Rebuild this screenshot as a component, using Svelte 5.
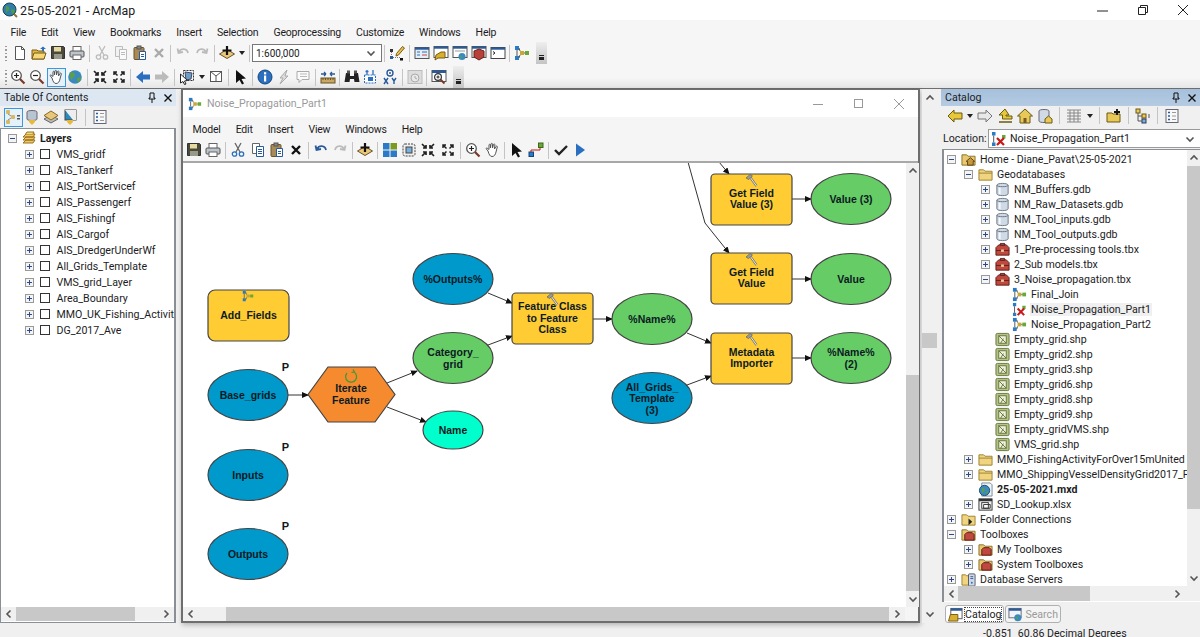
<script lang="ts">
  const I: Record<string, string> = {
    new: '<path d="M3.5 1.5h6l3 3v10h-9z" fill="#fff" stroke="#555"/><path d="M9.5 1.5v3h3" fill="none" stroke="#555"/>',
    open: '<path d="M1 5h5l1 1h6v8H1z" fill="#e0b94a" stroke="#7a5a10"/><path d="M1 14l2-6h12l-2 6z" fill="#f4d87a" stroke="#7a5a10"/><path d="M9 4l3-2.5 3 2.5h-2v2h-2V4z" fill="#2a6fc0"/>',
    save: '<path d="M1.5 1.5h12l1 1v11h-13z" fill="#4a4a3c" stroke="#333"/><rect x="4" y="2" width="7" height="4.5" fill="#e8d9a0"/><rect x="4" y="9" width="8" height="5" fill="#9a9a8a"/>',
    print: '<rect x="4" y="1.5" width="8" height="5" fill="#fff" stroke="#666"/><rect x="1" y="6" width="14" height="6" rx="1" fill="#bcc4cc" stroke="#555"/><rect x="4" y="10" width="8" height="4.5" fill="#fff" stroke="#666"/>',
    cut: '<path d="M5 1l5 9M11 1l-5 9" stroke="#666" stroke-width="1.3" fill="none"/><circle cx="4.5" cy="12" r="2.2" fill="none" stroke="#2a6fc0" stroke-width="1.3"/><circle cx="11.5" cy="12" r="2.2" fill="none" stroke="#2a6fc0" stroke-width="1.3"/>',
    cutg: '<g opacity=".45"><path d="M5 1l5 9M11 1l-5 9" stroke="#777" stroke-width="1.3" fill="none"/><circle cx="4.5" cy="12" r="2.2" fill="none" stroke="#777" stroke-width="1.3"/><circle cx="11.5" cy="12" r="2.2" fill="none" stroke="#777" stroke-width="1.3"/></g>',
    copy: '<path d="M2.5 1.5h7v10h-7z" fill="#fff" stroke="#666"/><path d="M6.5 4.5h7v10h-7z" fill="#fff" stroke="#2a5a9a"/><path d="M8 7.5h4M8 9.5h4M8 11.5h4" stroke="#2a5a9a"/>',
    copyg: '<g opacity=".45"><path d="M2.5 1.5h7v10h-7z" fill="#eee" stroke="#777"/><path d="M6.5 4.5h7v10h-7z" fill="#fff" stroke="#777"/><path d="M8 7.5h4M8 9.5h4" stroke="#777"/></g>',
    paste: '<rect x="2" y="2.5" width="10" height="12" rx="1" fill="#a88a58" stroke="#6a5228"/><rect x="5" y="1" width="4" height="3" fill="#888" stroke="#555"/><path d="M7.5 6.5h6v8h-6z" fill="#fff" stroke="#2a5a9a"/><path d="M9 9.5h3M9 11.5h3" stroke="#2a5a9a"/>',
    del: '<path d="M4 4l8 8M12 4l-8 8" stroke="#111" stroke-width="2.4"/>',
    delg: '<path d="M4 4l8 8M12 4l-8 8" stroke="#aaa" stroke-width="2.4"/>',
    undo: '<path d="M4 7c2-4 8-4 9 1M2.5 3.5L3.5 8l4.5-1" fill="none" stroke="#2a5a9a" stroke-width="1.8"/>',
    undog: '<path d="M4 7c2-4 8-4 9 1M2.5 3.5L3.5 8l4.5-1" fill="none" stroke="#bbb" stroke-width="1.8"/>',
    redog: '<path d="M12 7C10 3 4 3 3 8M13.5 3.5L12.5 8 8 7" fill="none" stroke="#bbb" stroke-width="1.8"/>',
    add: '<path d="M0.5 9L8 4.5 15.5 9 8 13.5z" fill="#e8c878" stroke="#6a5228"/><path d="M8 1v9M3.5 5.5h9" stroke="#111" stroke-width="2.2"/>',
    edit: '<rect x="1" y="4" width="3" height="3" fill="#333"/><rect x="1" y="11" width="3" height="3" fill="#2a5a9a"/><rect x="11" y="13" width="3" height="2.5" fill="#111"/><path d="M2.5 7v4M4 12.5h7" stroke="#777" stroke-dasharray="1 1"/><path d="M13.5 1.5l2 1.5-6 7-2.5 1 .5-2.5z" fill="#e8c050" stroke="#7a5a10"/>',
    zoomin: '<circle cx="6.5" cy="6.5" r="4.8" fill="#fff" stroke="#555" stroke-width="1.3"/><path d="M10 10l4.5 4.5" stroke="#7a3a2a" stroke-width="2.2"/><path d="M4 6.5h5M6.5 4v5" stroke="#222" stroke-width="1.2"/>',
    zoomout: '<circle cx="6.5" cy="6.5" r="4.8" fill="#fff" stroke="#555" stroke-width="1.3"/><path d="M10 10l4.5 4.5" stroke="#7a3a2a" stroke-width="2.2"/><path d="M4 6.5h5" stroke="#222" stroke-width="1.2"/>',
    hand: '<path d="M4 9L2 6.5c.6-.8 1.5-.4 3 1V3c0-1 1.4-1 1.5 0v3l.5-4c.2-1 1.5-.8 1.5.2V6l1-3.5c.3-.9 1.5-.6 1.4.3L10.5 7l1.5-2.5c.5-.8 1.6-.3 1.3.5L12 10c-.6 2.5-1.5 4.5-4 4.5-2 0-3-2-4-5.5z" fill="#fff" stroke="#555"/>',
    globe: '<circle cx="8" cy="8" r="6.8" fill="#3a8ac0"/><path d="M4 3c2 0 4 1 4 3s-3 2-3 5c-2-1-3-5-1-8zM10 9c2-1 4-1 4 0 0 2-2 4-3 4s-1-3-1-4z" fill="#5aa048"/>',
    fin: '<path d="M2 2l4 4M6 3v3H3M14 2l-4 4M10 3v3h3M2 14l4-4M6 13v-3H3M14 14l-4-4M10 13v-3h3" stroke="#222" stroke-width="1.7" fill="none"/>',
    fout: '<path d="M3 6V3h3M3 3l3.5 3.5M13 6V3h-3M13 3L9.5 6.5M3 10v3h3M3 13l3.5-3.5M13 10v3h-3M13 13L9.5 9.5" stroke="#222" stroke-width="1.5" fill="none"/>',
    back: '<path d="M1 8l7-6v3.5h7v5H8V14z" fill="#2a6fc0"/>',
    fwdg: '<path d="M15 8L8 2v3.5H1v5h7V14z" fill="#bbb"/>',
    sel: '<rect x="4.5" y="1.5" width="10" height="10" fill="none" stroke="#333" stroke-dasharray="2 1"/><path d="M6 3l7 1-1 6-5 1z" fill="#6aa0c8" stroke="#446"/><path d="M1.5 5l7 6.5-3 .5 1.5 3-1.5.5-1.5-3-2.5 1.5z" fill="#fff" stroke="#222"/>',
    clear: '<rect x="2.5" y="2.5" width="11" height="10" fill="#fff" stroke="#555"/><path d="M2.5 2.5L8 7l5-4M8 7v5.5" fill="none" stroke="#555"/>',
    ptr: '<path d="M3 1l10 8.5-4.5.5 2.5 4.5-2 1-2.5-4.5L3 14z" fill="#111"/>',
    info: '<circle cx="8" cy="8" r="7" fill="#2a6fc0" stroke="#14457a"/><rect x="7" y="6.5" width="2.2" height="6" fill="#fff"/><rect x="7" y="3.2" width="2.2" height="2.2" fill="#fff"/>',
    bolt: '<path d="M11 1L4 9h3l-3 6 8-8H9z" fill="#ddd" stroke="#aaa"/>',
    html: '<path d="M2 2.5h12v8H7l-3 3v-3H2z" fill="#fafafa" stroke="#aaa"/><path d="M5 5h7M5 7.5h7" stroke="#bbb"/>',
    meas: '<rect x="1" y="9" width="14" height="5" fill="#c8a860" stroke="#6a5228"/><path d="M3 9v2M5.5 9v2M8 9v2M10.5 9v2M13 9v2" stroke="#6a5228"/><path d="M1 5h5M6 5L4 3M6 5L4 7M15 5h-5M10 5l2-2M10 5l2 2" stroke="#2a5a9a" stroke-width="1.3" fill="none"/>',
    bino: '<path d="M2 4h4v3h4V4h4l1.5 9h-5L10 10H6l-.5 3h-5z" fill="#222"/><rect x="3" y="1.5" width="3" height="3" fill="#555"/><rect x="10" y="1.5" width="3" height="3" fill="#555"/>',
    route: '<rect x="1.5" y="6" width="11" height="8" fill="#fff" stroke="#2a6fc0" stroke-dasharray="2 1"/><path d="M4 1v5M2.5 2.5h3M10 1v5" stroke="#2a6fc0" stroke-width="1.3"/><rect x="5" y="8" width="5" height="4" fill="#2a6fc0"/>',
    xy: '<circle cx="8" cy="4" r="3" fill="#fff" stroke="#2a5a9a" stroke-width="1.4"/><circle cx="8" cy="4" r="1" fill="#2a5a9a"/><path d="M2 9l4 6M6 9l-4 6M10 9l2 3 2-3M12 12v3" stroke="#2a5a9a" stroke-width="1.4" fill="none"/>',
    time: '<rect x="1" y="1.5" width="14" height="13" fill="#ddd" stroke="#bbb"/><circle cx="8" cy="9" r="4" fill="#e8e8e8" stroke="#aaa"/><path d="M8 7v2l2 1" stroke="#aaa" fill="none"/>',
    winz: '<rect x="1" y="1.5" width="14" height="11" fill="#fff" stroke="#555"/><rect x="1" y="1.5" width="14" height="2.5" fill="#2a5a9a"/><circle cx="7" cy="8" r="3.4" fill="#fff" stroke="#333" stroke-width="1.2"/><path d="M5.5 8h3M7 6.5v3" stroke="#222"/><path d="M9.5 10.5l4 4" stroke="#7a3a2a" stroke-width="2"/>',
    wtoc: '<rect x="1" y="2.5" width="14" height="11" fill="#e4eef8" stroke="#555"/><rect x="1" y="2.5" width="14" height="2.2" fill="#2a5a9a"/><path d="M3 7h3M3 10h3M8 7h5" stroke="#2a6fc0"/><path d="M8 10h5" stroke="#d04040"/>',
    wcat: '<rect x="1" y="1.5" width="14" height="11" fill="#fff" stroke="#555"/><rect x="1" y="1.5" width="14" height="2.2" fill="#2a5a9a"/><path d="M3 10l5-3h4v6H5l-3 2z" fill="#d8b030" stroke="#7a5a10"/>',
    wsea: '<rect x="1" y="1.5" width="14" height="11" fill="#fff" stroke="#555"/><rect x="1" y="1.5" width="14" height="2.2" fill="#2a5a9a"/><rect x="3" y="5" width="10" height="2" fill="#ccc"/><circle cx="10" cy="11.5" r="3.5" fill="#3a8ac0"/><path d="M8 10.5c2 0 3 1 2 3z" fill="#5aa048"/>',
    wtbx: '<rect x="1" y="1.5" width="14" height="11" fill="#fff" stroke="#555"/><rect x="1" y="1.5" width="14" height="2.2" fill="#2a5a9a"/><path d="M3 6l5-2 5 2v6l-5 3-5-3z" fill="#b8403a" stroke="#6a201c"/>',
    wpy: '<rect x="1" y="2.5" width="14" height="11" fill="#fff" stroke="#444"/><rect x="1" y="2.5" width="14" height="2.2" fill="#2a5a9a"/><path d="M3 6.5l2 1.5-2 1.5" fill="none" stroke="#222"/>',
    modelb: '<rect x="1" y="1" width="4" height="4" fill="#2a7ac8"/><rect x="1" y="11" width="4" height="4" fill="#2a7ac8"/><rect x="6" y="6" width="4" height="4" fill="#c8a838"/><rect x="11" y="6" width="4" height="4" fill="#68a838"/><path d="M3 5v6M5 3l1 3M5 13l1-3M10 8h1" stroke="#555" fill="none"/>',
    modelx: '<rect x="1" y="1" width="3.5" height="3.5" fill="#2a7ac8"/><rect x="1" y="11.5" width="3.5" height="3.5" fill="#2a7ac8"/><rect x="11" y="4" width="3.5" height="3.5" fill="#68a838"/><path d="M2.7 4.5v7" stroke="#555"/><path d="M6 7l7 7M13 7l-7 7" stroke="#c81818" stroke-width="2.2"/>',
    tocd: '<rect x="1" y="1" width="4" height="4" rx="1" fill="#d8b860"/><rect x="6" y="6" width="4" height="4" rx="1" fill="#d8b860"/><rect x="1" y="11" width="4" height="4" rx="1" fill="#d8b860"/><rect x="12" y="6" width="3" height="1.5" fill="#555"/><rect x="12" y="9" width="3" height="1.5" fill="#555"/><path d="M3 5l3 2M3 11l3-2" stroke="#888"/>',
    tocs: '<path d="M3 3c0-2 10-2 10 0v7c0 2-10 2-10 0z" fill="#b8c4d0" stroke="#667"/><path d="M5 11h6v2l-3 3-3-3z" fill="#e8b838"/>',
    tocv: '<path d="M1 10l7 4 7-4-7-4z" fill="#bbb" stroke="#666"/><path d="M1 6.5L8 2l7 4.5L8 11z" fill="#e8c878" stroke="#8a6a28"/>',
    tocl: '<rect x="3" y="1" width="11" height="10" fill="#2a8ac0" stroke="#444"/><path d="M3 1l8 10h3V1z" fill="#eee"/><path d="M5 11h6v2l-3 3-3-3z" fill="#e8b838"/>',
    opts: '<rect x="2" y="1.5" width="12" height="13" fill="#f8f8f8" stroke="#667"/><path d="M4 4.5h2M4 8h2M4 11.5h2" stroke="#2a5a9a" stroke-width="1.4"/><path d="M8 4.5h4M8 8h4M8 11.5h4" stroke="#999"/>',
    grid4: '<rect x="1" y="1" width="6.5" height="6.5" fill="#2a7ac8"/><rect x="8.5" y="1" width="6.5" height="6.5" fill="#7a9a20"/><rect x="1" y="8.5" width="6.5" height="6.5" fill="#2a7ac8"/><rect x="8.5" y="8.5" width="6.5" height="6.5" fill="#2a7ac8"/>',
    auto: '<rect x="2" y="2" width="12" height="12" rx="2" fill="#f0f0f0" stroke="#444" stroke-dasharray="2 1"/><rect x="5" y="5" width="6" height="6" fill="#7ab0d8" stroke="#444"/>',
    conn: '<rect x="1" y="10" width="4.5" height="4.5" fill="#2a7ac8" stroke="#14457a"/><rect x="10.5" y="1" width="4.5" height="4.5" fill="#68a838" stroke="#3a6a18"/><path d="M3 10V8h9V5.5" fill="none" stroke="#c81818"/>',
    check: '<path d="M2 8l4 4 8-8" fill="none" stroke="#222" stroke-width="2.4"/>',
    run: '<path d="M4 1.5l9 6.5-9 6.5z" fill="#2a6fc0"/>',
    cback: '<path d="M1 8l6-6v3h8v6H7v3z" fill="#e8c838" stroke="#6a5a10"/>',
    cfwd: '<path d="M15 8L9 2v3H1v6h8v3z" fill="#e8e8e8" stroke="#777"/>',
    cup: '<path d="M8 1L2 7h3.5v4H15V8H9V7h3z" fill="#e8c838" stroke="#6a5a10"/><path d="M2 14h13" stroke="#6a5a10" stroke-width="1.5"/>',
    chome: '<path d="M8 1L0.5 8H3v7h10V8h2.5z" fill="#e8c858" stroke="#6a5a10"/><rect x="6.5" y="10" width="3" height="5" fill="#7a5a20"/>',
    cconn: '<path d="M2 3c0-2 10-2 10 0v10c0 2-10 2-10 0z" fill="#d0dae6" stroke="#667"/><path d="M8 11l3.5-3 3.500 3v4H8z" fill="#e8c858" stroke="#6a5a10"/>',
    cgrid: '<path d="M1 2h14M1 5h14M1 8h14M1 11h14M1 14h14M4 2v12M8 2v12M12 2v12" stroke="#888"/>',
    cnew: '<path d="M1 5h5l1 1h7v8H1z" fill="#e8c858" stroke="#6a5a10"/><path d="M11 1v6M8 4h6" stroke="#111" stroke-width="1.8"/>',
    ctree: '<rect x="1" y="1" width="4" height="4" fill="#e8c858" stroke="#6a5a10"/><rect x="7" y="6" width="4" height="4" fill="#e8c858" stroke="#6a5a10"/><rect x="7" y="11" width="4" height="4" fill="#7ab0d8" stroke="#336"/><path d="M3 5v8h4M3 8h4" stroke="#555" fill="none"/><path d="M13 7h2M13 9h2" stroke="#555"/>',
    catalog: '<rect x="3" y="1.5" width="12" height="11" fill="#fff" stroke="#555"/><rect x="3" y="1.5" width="12" height="2.5" fill="#2a5a9a"/><path d="M0.5 15l2-7h8v7z" fill="#d8b030" stroke="#7a5a10"/>',
    search: '<rect x="1" y="1.5" width="13" height="10" fill="#f0f4f8" stroke="#667"/><rect x="1" y="1.5" width="13" height="2.5" fill="#2a5a9a"/><circle cx="10.5" cy="11.5" r="3.8" fill="#3a8ac0"/><path d="M8 10c2 0 3 1 2 4z" fill="#5aa048"/>',
    gdb: '<path d="M2 3.5c0-2.7 12-2.7 12 0v9c0 2.7-12 2.7-12 0z" fill="#d0dae6" stroke="#66727e"/><path d="M2 3.5c0 2 12 2 12 0" fill="none" stroke="#66727e"/><path d="M5 6v7" stroke="#f4f8fc" stroke-width="2"/>',
    tbx: '<path d="M1 6l3-3h8l3 3v8H1z" fill="#c0483e" stroke="#5e1e18"/><path d="M1 9h14" stroke="#5e1e18"/><rect x="6" y="1.5" width="4" height="2" fill="none" stroke="#5e1e18"/><rect x="6.5" y="8" width="3" height="2.5" fill="#e8d0a0"/>',
    shp: '<rect x="1" y="1.5" width="14" height="13" rx="1.5" fill="#b4c488" stroke="#66743c"/><rect x="4" y="4" width="8" height="8" fill="#eef2dc" stroke="#66743c"/><path d="M4 4l8 8M6 12l3-5" stroke="#66743c"/>',
    folder: '<path d="M1 3h5l1.5 1.5H15V14H1z" fill="#f0d480" stroke="#9a8230"/><path d="M1 6.5h14" stroke="#9a8230"/>',
    homef: '<path d="M1 3h5l1.5 1.5H15V14H1z" fill="#e8c870" stroke="#8a7028"/><path d="M10 6l4.5 4H13v4H7v-4H5.5z" fill="#c89840" stroke="#5a4010"/>',
    mxd: '<path d="M4 1h9l2 2v12H4z" fill="#eef4fa" stroke="#7a8a9a"/><circle cx="7" cy="9" r="5.5" fill="#3a8ac0" stroke="#1a4a6a"/><path d="M4.5 6c2 0 3.5 1 2.5 3s-2 2-3 3M8 11c1-1 3-1 3-.5s-1 2-2 2z" fill="#5aa048"/>',
    xls: '<rect x="1" y="2" width="14" height="12" fill="#eee" stroke="#333"/><rect x="1" y="2" width="14" height="2.5" fill="#333"/><rect x="4" y="6" width="7" height="6" fill="#fff" stroke="#333"/><path d="M6 8h7v4H6z" fill="none" stroke="#333"/>',
    fconn: '<path d="M1 3h5l1.5 1.5H15V14H1z" fill="#f0d480" stroke="#9a8230"/><path d="M8 7l4 3.5-4 3.5z" fill="#222"/>',
    tfold: '<path d="M1 3h5l1.5 1.5H15V14H1z" fill="#e8c870" stroke="#8a7028"/><path d="M4 8l2-2h6l2 2v6H4z" fill="#c0483e" stroke="#5e1e18"/>',
    dbs: '<path d="M1 3h4l1 1h4v10H1z" fill="#f0d480" stroke="#9a8230"/><rect x="8" y="2" width="7" height="13" rx="1" fill="#d0dae6" stroke="#556"/><path d="M10 5h3M10 7h3" stroke="#2a5a9a"/><circle cx="11.5" cy="11.5" r="1" fill="#2a6fc0"/>',
    layers: '<path d="M2 13l3-3h9l-2 3zM2 10l3-3h9l-2 3zM2 7l3-3h9l-2 3z" fill="#f0c860" stroke="#9a7020"/><path d="M4.5 4L6 2h7l-1 2" fill="#f0d880" stroke="#9a7020"/>'
  };

  const toolbarMain = ['new','open','save','print','|','cutg','copyg','paste','delg','|','undog','redog','|','add','v','|'];
  const toolbarMainEnd = ['|','edit','|','wtoc','wcat','wsea','wtbx','wpy','|','modelb'];
  const toolbarNav = ['zoomin','zoomout','*hand','globe','|','fin','fout','|','back','fwdg','|','sel','v','clear','|','ptr','|','info','bolt','html','|','meas','|','bino','route','xy','|','time','|','winz'];
  const toolbarToc = ['*tocd','tocs','tocv','tocl','|','opts'];
  const toolbarModel = ['save','print','|','cut','copy','paste','del','|','undo','redog','|','add','|','grid4','auto','fin','fout','|','zoomin','hand','|','ptr','conn','|','check','run'];
  const toolbarCatalog = ['cback','v','cfwd','cup','chome','cconn','|','cgrid','v','|','cnew','|','ctree','|','opts'];

  const menus = ['File','Edit','View','Bookmarks','Insert','Selection','Geoprocessing','Customize','Windows','Help'];
  const modelMenus = ['Model','Edit','Insert','View','Windows','Help'];

  const layers = ['VMS_gridf','AIS_Tankerf','AIS_PortServicef','AIS_Passengerf','AIS_Fishingf','AIS_Cargof','AIS_DredgerUnderWf','All_Grids_Template','VMS_grid_Layer','Area_Boundary','MMO_UK_Fishing_Activit','DG_2017_Ave'];

  const cat = [
    { d: 0, t: 'm', i: 'homef', n: 'Home - Diane_Pavat\\25-05-2021' },
    { d: 1, t: 'm', i: 'folder', n: 'Geodatabases' },
    { d: 2, t: 'p', i: 'gdb', n: 'NM_Buffers.gdb' },
    { d: 2, t: 'p', i: 'gdb', n: 'NM_Raw_Datasets.gdb' },
    { d: 2, t: 'p', i: 'gdb', n: 'NM_Tool_inputs.gdb' },
    { d: 2, t: 'p', i: 'gdb', n: 'NM_Tool_outputs.gdb' },
    { d: 2, t: 'p', i: 'tbx', n: '1_Pre-processing tools.tbx' },
    { d: 2, t: 'p', i: 'tbx', n: '2_Sub models.tbx' },
    { d: 2, t: 'm', i: 'tbx', n: '3_Noise_propagation.tbx' },
    { d: 3, t: '', i: 'modelb', n: 'Final_Join' },
    { d: 3, t: '', i: 'modelx', n: 'Noise_Propagation_Part1', sel: true },
    { d: 3, t: '', i: 'modelb', n: 'Noise_Propagation_Part2' },
    { d: 2, t: '', i: 'shp', n: 'Empty_grid.shp' },
    { d: 2, t: '', i: 'shp', n: 'Empty_grid2.shp' },
    { d: 2, t: '', i: 'shp', n: 'Empty_grid3.shp' },
    { d: 2, t: '', i: 'shp', n: 'Empty_grid6.shp' },
    { d: 2, t: '', i: 'shp', n: 'Empty_grid8.shp' },
    { d: 2, t: '', i: 'shp', n: 'Empty_grid9.shp' },
    { d: 2, t: '', i: 'shp', n: 'Empty_gridVMS.shp' },
    { d: 2, t: '', i: 'shp', n: 'VMS_grid.shp' },
    { d: 1, t: 'p', i: 'folder', n: 'MMO_FishingActivityForOver15mUnited' },
    { d: 1, t: 'p', i: 'folder', n: 'MMO_ShippingVesselDensityGrid2017_FC' },
    { d: 1, t: '', i: 'mxd', n: '25-05-2021.mxd', bold: true },
    { d: 1, t: 'p', i: 'xls', n: 'SD_Lookup.xlsx' },
    { d: 0, t: 'p', i: 'fconn', n: 'Folder Connections' },
    { d: 0, t: 'm', i: 'tfold', n: 'Toolboxes' },
    { d: 1, t: 'p', i: 'tfold', n: 'My Toolboxes' },
    { d: 1, t: 'p', i: 'tfold', n: 'System Toolboxes' },
    { d: 0, t: 'p', i: 'dbs', n: 'Database Servers' }
  ];

  // diagram nodes, in page coordinates (the svg viewBox starts at the canvas corner)
  const BLUE = '#0099cc', GREEN = '#66cc66', YELLOW = '#ffcc33';
  const ellipses = [
    { x: 248, y: 395, c: BLUE, l: ['Base_grids'], p: true },
    { x: 248, y: 475, c: BLUE, l: ['Inputs'], p: true },
    { x: 248, y: 554, c: BLUE, l: ['Outputs'], p: true },
    { x: 453, y: 279, c: BLUE, l: ['%Outputs%'] },
    { x: 453, y: 358, c: GREEN, l: ['Category_', 'grid'] },
    { x: 453, y: 430, c: '#00ffcc', l: ['Name'], rx: 30, ry: 19 },
    { x: 652, y: 319, c: GREEN, l: ['%Name%'] },
    { x: 652, y: 398, c: BLUE, l: ['All_Grids_', 'Template', '(3)'] },
    { x: 851, y: 199, c: GREEN, l: ['Value (3)'] },
    { x: 851, y: 279, c: GREEN, l: ['Value'] },
    { x: 851, y: 358, c: GREEN, l: ['%Name%', '(2)'] }
  ];
  const boxes = [
    { x: 208, y: 290, l: ['Add_Fields'], model: true, r: 7 },
    { x: 512, y: 293, l: ['Feature Class', 'to Feature', 'Class'], r: 4 },
    { x: 711, y: 174, l: ['Get Field', 'Value (3)'], r: 4 },
    { x: 711, y: 253, l: ['Get Field', 'Value'], r: 4 },
    { x: 711, y: 333, l: ['Metadata', 'Importer'], r: 4 }
  ];
  const links = [
    '288,395 308,395', '387,383 417,371', '387,407 426,422',
    '488,293 512,303', '488,345 512,336', '593,319 612,319',
    '687,333 711,343', '687,385 711,376', '792,358 811,358',
    '792,199 811,199', '792,279 811,279',
    '688,162 705,223 729,253', '719,162 729,174'
  ];

  function lineY(cy: number, count: number, i: number) {
    return cy + 4 + (i - (count - 1) / 2) * 11.5;
  }
</script>

{#snippet icon(name: string, size = 16)}
  <svg class="ico" width={size} height={size} viewBox="0 0 16 16">{@html I[name]}</svg>
{/snippet}

{#snippet tools(list: string[])}
  {#each list as t}
    {#if t === '|'}
      <span class="sep"></span>
    {:else if t === 'v'}
      <span class="drop"></span>
    {:else}
      <span class="btn" class:on={t[0] === '*'}>{@render icon(t.replace('*', ''))}</span>
    {/if}
  {/each}
{/snippet}

{#snippet toggle(kind: string)}
  <span class="tog">
    {#if kind}
      <svg width="9" height="9" viewBox="0 0 9 9"><rect x=".5" y=".5" width="8" height="8" fill="#f4f4f4" stroke="#999"/><path d={kind === 'p' ? 'M2 4.5h5M4.5 2v5' : 'M2 4.5h5'} stroke="#2a4a8a"/></svg>
    {/if}
  </span>
{/snippet}

{#snippet arrows(dir: string)}
  <svg class="chev" width="10" height="10" viewBox="0 0 10 10">
    <path d={dir === 'l' ? 'M6.5 1.5L3 5l3.5 3.5' : dir === 'r' ? 'M3.5 1.5L7 5 3.5 8.5' : dir === 'u' ? 'M1.5 6.5L5 3l3.5 3.5' : 'M1.5 3.5L5 7l3.5-3.5'} />
  </svg>
{/snippet}

<div class="app">
  <header class="title">
    <svg class="ico" width="16" height="16" viewBox="0 0 16 16"><circle cx="7.5" cy="7.5" r="6.5" fill="#2f7fa8" stroke="#15404f"/><path d="M4 4c3 0 4 2 3 4s-3 1-3 4M9 8c2-1 4 0 4 1s-2 3-3 3z" fill="#4f9a50"/><path d="M12 12l3 3" stroke="#8a7a30" stroke-width="2"/></svg>
    <span class="title-text">25-05-2021 - ArcMap</span>
    <div class="winbtns">
      <svg width="16" height="16" viewBox="0 0 16 16"><path d="M2 9h11" stroke="#222"/></svg>
      <svg width="16" height="16" viewBox="0 0 16 16"><path d="M3.5 5.5h7v7h-7zM5.5 5.5v-2h7v7h-2" fill="none" stroke="#222"/></svg>
      <svg width="16" height="16" viewBox="0 0 16 16"><path d="M3 3l10 10M13 3L3 13" stroke="#222"/></svg>
    </div>
  </header>

  <div class="chrome">
    <nav class="menu">{#each menus as m}<span>{m}</span>{/each}</nav>
    <div class="bar bar-a">
      <span class="grip"></span>
      {@render tools(toolbarMain)}
      <span class="scale"><span>1:600,000</span>{@render arrows('d')}</span>
      {@render tools(toolbarMainEnd)}
      <span class="more"></span>
    </div>
    <div class="bar bar-b">
      <span class="grip"></span>
      {@render tools(toolbarNav)}
      <span class="more"></span>
    </div>
  </div>

  <main class="main">
    <section class="toc">
      <div class="dock-title light">
        <span>Table Of Contents</span>
        <span class="pin">
          <svg width="10" height="11" viewBox="0 0 10 11"><path d="M3 1h4v5h1v1H2V6h1zM5 7v4" fill="none" stroke="#111"/></svg>
          <svg width="10" height="10" viewBox="0 0 10 10"><path d="M1.5 1.5l7 7M8.5 1.5l-7 7" stroke="#111" stroke-width="1.4"/></svg>
        </span>
      </div>
      <div class="bar dock-tools toc-tools">{@render tools(toolbarToc)}</div>
      <div class="toc-tree">
        <div class="rows">
          <div class="row toc-row">{@render toggle('m')}<span class="node">{@render icon('layers')}</span><b>Layers</b></div>
          {#each layers as l}
            <div class="row toc-row sub">{@render toggle('p')}<span class="chk"></span><span class="lbl">{l}</span></div>
          {/each}
        </div>
        <div class="hscroll">
          {@render arrows('l')}<span class="thumb toc-thumb"></span>{@render arrows('r')}
        </div>
      </div>
    </section>

    <section class="model">
      <div class="model-title">
        {@render icon('modelb', 14)}
        <span>Noise_Propagation_Part1</span>
        <div class="winbtns grey">
          <svg width="16" height="16" viewBox="0 0 16 16"><path d="M2 8.5h10" stroke="#999"/></svg>
          <svg width="16" height="16" viewBox="0 0 16 16"><rect x="3.5" y="3.5" width="8" height="8" fill="none" stroke="#999"/></svg>
          <svg width="16" height="16" viewBox="0 0 16 16"><path d="M3 3l10 10M13 3L3 13" stroke="#999"/></svg>
        </div>
      </div>
      <nav class="menu model-menu">{#each modelMenus as m}<span>{m}</span>{/each}</nav>
      <div class="bar model-tools">{@render tools(toolbarModel)}</div>
      <div class="model-body">
        <svg class="canvas" width="723" height="446" viewBox="183 163 723 446">
          <defs>
            <marker id="head" markerWidth="7" markerHeight="6" refX="6" refY="3" orient="auto" markerUnits="userSpaceOnUse">
              <path d="M0 0l7 3-7 3z" fill="#111"/>
            </marker>
            <g id="hammer">
              <path d="M-2 -3l6.5 9" stroke="#777" stroke-width="2.2"/>
              <path d="M-2 -3l6.5 9" stroke="#e8e8e0" stroke-width="1"/>
              <path d="M-6 -2l4-3.5 2.5 1.5-4 3.5z" fill="#9a9a9a" stroke="#555" stroke-width=".6"/>
            </g>
          </defs>
          {#each links as pts}
            <polyline points={pts} fill="none" stroke="#333" marker-end="url(#head)"/>
          {/each}
          {#each boxes as b}
            <rect x={b.x} y={b.y} width="81" height="51" rx={b.r} fill={YELLOW} stroke="#444" stroke-width="1.2"/>
            {#if b.model}
              <svg x={b.x + 34} y={b.y} width="12" height="12" viewBox="0 0 16 16">{@html I.modelb}</svg>
            {:else}
              <use href="#hammer" x={b.x + 41} y={b.y + 6}/>
            {/if}
            {#each b.l as line, i}
              <text x={b.x + 40.5} y={lineY(b.y + 24.5, b.l.length, i)}>{line}</text>
            {/each}
          {/each}
          {#each ellipses as e}
            <ellipse cx={e.x} cy={e.y} rx={e.rx ?? 40} ry={e.ry ?? 25.5} fill={e.c} stroke="#444" stroke-width="1.2"/>
            {#each e.l as line, i}
              <text x={e.x} y={lineY(e.y, e.l.length, i)}>{line}</text>
            {/each}
            {#if e.p}<text class="param" x={e.x + 37.5} y={e.y - 24}>P</text>{/if}
          {/each}
          <polygon points="308,394.5 328,367 375,367 395,394.5 375,422 328,422" fill="#f58a2e" stroke="#444" stroke-width="1.2"/>
          <path d="M347 373a5.5 5.5 0 1 0 7 -1M353 369.5l1.5 2.5-3 .5" fill="none" stroke="#3a9a3a" stroke-width="1.2"/>
          <text x="351" y="392">Iterate</text>
          <text x="351" y="403.5">Feature</text>
        </svg>
        <div class="vscroll model-v">
          {@render arrows('u')}<span class="gap model-v-gap"></span><span class="thumb model-v-thumb"></span>{@render arrows('d')}
        </div>
      </div>
      <div class="model-h">
        <div class="hscroll">
          {@render arrows('l')}<span class="gap model-h-gap"></span><span class="thumb model-h-thumb"></span>{@render arrows('r')}
        </div>
        <span class="corner"></span>
      </div>
    </section>

    <div class="vscroll app-v">
      {@render arrows('u')}<span class="gap app-v-a"></span><span class="thumb app-v-thumb"></span><span class="gap"></span>{@render arrows('d')}
    </div>

    <section class="catalog">
      <div class="dock-title blue">
        <span>Catalog</span>
        <span class="pin">
          <svg width="10" height="11" viewBox="0 0 10 11"><path d="M3 1h4v5h1v1H2V6h1zM5 7v4" fill="none" stroke="#111"/></svg>
          <svg width="10" height="10" viewBox="0 0 10 10"><path d="M1.5 1.5l7 7M8.5 1.5l-7 7" stroke="#111" stroke-width="1.4"/></svg>
        </span>
      </div>
      <div class="bar dock-tools cat-tools">{@render tools(toolbarCatalog)}</div>
      <div class="location">
        <span class="loc-label">Location:</span>
        <span class="loc-box">{@render icon('modelx')}<span class="loc-text">Noise_Propagation_Part1</span>{@render arrows('d')}</span>
      </div>
      <div class="cat-tree">
        <div class="cat-top">
          <div class="rows cat-rows">
            {#each cat as r}
              <div class="row" style="padding-left: {2.5 + r.d * 17}px">
                {@render toggle(r.t)}
                <span class="node">{@render icon(r.i, 15)}</span>
                <span class="lbl" class:sel={r.sel} class:bold={r.bold}>{r.n}</span>
              </div>
            {/each}
          </div>
          <div class="vscroll cat-v">
            {@render arrows('u')}<span class="thumb cat-v-thumb"></span><span class="gap"></span>{@render arrows('d')}
          </div>
        </div>
        <div class="hscroll cat-h">
          {@render arrows('l')}<span class="thumb cat-h-thumb"></span><span class="gap"></span>{@render arrows('r')}
        </div>
      </div>
      <div class="tabs">
        <span class="tab active">{@render icon('catalog', 15)}<span class="focus">Catalog</span></span>
        <span class="tab">{@render icon('search', 15)}<span class="off">Search</span></span>
      </div>
    </section>
  </main>

  <footer class="status"><span>-0.851  60.86 Decimal Degrees</span></footer>
</div>

<style>
  :global(body) {
    margin: 0;
    background: #f0f0f0;
  }

  .app {
    width: 1200px;
    height: 637px;
    overflow: hidden;
    display: flex;
    flex-direction: column;
    font-family: Roboto, "Liberation Sans", sans-serif;
    font-size: 10.6px;
    color: #1c1c24;
    background: #f0f0f0;
  }

  .ico { display: block; flex: none; }

  .title {
    height: 20px;
    flex: none;
    display: flex;
    align-items: center;
    padding-left: 2px;
    background: #fff;
    font-size: 12.4px;
  }
  .title-text { margin-left: 2px; }
  .winbtns {
    margin-left: auto;
    display: flex;
    gap: 24px;
    padding-right: 9px;
  }

  .chrome {
    height: 69px;
    flex: none;
    box-sizing: border-box;
    background: linear-gradient(#f6f6f6 85%, #e6e6e6);
    border-bottom: 1px solid #6e6e6e;
  }

  .menu {
    display: flex;
    height: 22px;
    padding-top: 2px;
    box-sizing: border-box;
    align-items: center;
    padding-left: 3px;
    font-size: 10.5px;
    letter-spacing: -0.2px;
  }
  .menu span { padding: 0 7.5px; }

  .bar {
    display: flex;
    align-items: center;
  }
  .bar-a { height: 22px; padding-left: 5px; }
  .bar-a .grip { margin-right: 3.5px; }
  .bar-b { height: 22px; padding-left: 5px; margin-top: 2px; }
  .bar-b .grip { margin-right: 1.5px; }
  .btn {
    width: 19px;
    height: 19px;
    display: flex;
    align-items: center;
    justify-content: center;
    flex: none;
    box-sizing: border-box;
  }
  .btn.on {
    background: #e4f1fb;
    border: 1px solid #3a98e0;
  }
  .sep {
    width: 1px;
    height: 17px;
    margin: 0 2.25px;
    background: #c4c4c4;
    flex: none;
  }
  .drop {
    width: 0;
    height: 0;
    margin: 0 2px 0 2.5px;
    border: 3.5px solid transparent;
    border-top: 4px solid #222;
    border-bottom: 0;
    flex: none;
  }
  .grip {
    width: 2px;
    height: 15px;
    background: repeating-linear-gradient(#999 0 1.5px, transparent 1.5px 3.5px);
    flex: none;
  }
  .more {
    width: 11px;
    height: 22px;
    margin-left: 4px;
    background: linear-gradient(#eee, #c4c4c4);
    position: relative;
    flex: none;
  }
  .more::after {
    content: "";
    position: absolute;
    left: 3px;
    bottom: 4px;
    width: 5px;
    height: 1px;
    border-top: 1px solid #222;
    border-bottom: 3px solid #222;
  }

  .scale {
    width: 130px;
    height: 18px;
    box-sizing: border-box;
    padding: 0 5px 0 3px;
    display: flex;
    align-items: center;
    justify-content: space-between;
    flex: none;
    background: #fff;
    border: 1px solid #777;
    font-size: 10px;
  }

  .chev {
    display: block;
    flex: none;
    fill: none;
    stroke: #555;
    stroke-width: 1.6;
  }

  .main {
    height: 538px;
    flex: none;
    display: flex;
    align-items: flex-start;
  }

  /* docked panes */
  .toc {
    width: 176px;
    height: 534px;
    flex: none;
    display: flex;
    flex-direction: column;
    margin-right: 5px;
  }
  .dock-title {
    height: 17px;
    flex: none;
    display: flex;
    align-items: center;
    justify-content: space-between;
    padding: 0 0 0 4px;
  }
  .dock-title.light { background: #dce7f2; }
  .dock-title.blue { background: linear-gradient(#a6c0dc, #b4cbe2); }
  .pin {
    display: flex;
    align-items: center;
    gap: 6px;
    padding-right: 3px;
  }
  .dock-tools { height: 22px; }
  .toc-tools { padding-left: 3.5px; }
  .toc-tools .sep { margin: 0 5px; }
  .toc-tree {
    flex: 1;
    min-height: 0;
    display: flex;
    flex-direction: column;
    background: #fff;
    border: 1px solid #8a8f96;
    border-right-width: 2px;
  }
  .rows {
    flex: 1;
    min-height: 0;
    overflow: hidden;
    padding-top: 1px;
  }
  .row {
    display: flex;
    align-items: center;
    white-space: nowrap;
    height: 15px;
  }
  .toc-row { height: 16px; padding-left: 6.5px; }
  .toc-row b { font-weight: 700; }
  .toc-row.sub .tog { margin-left: 17px; }
  .toc-row.sub .chk { margin-left: 1px; }
  .tog {
    width: 14px;
    flex: none;
    display: flex;
  }
  .tog svg { display: block; }
  .node {
    width: 15px;
    flex: none;
    display: flex;
    justify-content: center;
    margin-right: 3.5px;
  }
  .chk {
    width: 10px;
    height: 10px;
    box-sizing: border-box;
    border: 1px solid #333;
    background: #fff;
    flex: none;
    margin-right: 6px;
  }
  .lbl { padding: 0 1px; }
  .lbl.sel { background: #f0f0f0; }
  .lbl.bold { font-weight: 700; }

  .hscroll {
    height: 14px;
    flex: none;
    display: flex;
    align-items: center;
    background: #f0f0f0;
    padding: 0 3px;
  }
  .toc-tree .hscroll { margin-bottom: 1px; }
  .hscroll .chev:last-child { margin-left: auto; }
  .thumb { background: #c8c8c8; flex: none; display: block; }
  .gap { flex: 1; display: block; }
  .hscroll .thumb { height: 100%; }
  .toc-thumb { width: 119px; margin-left: 2px; }

  /* floating model window */
  .model {
    width: 739px;
    height: 534px;
    flex: none;
    box-sizing: border-box;
    display: flex;
    flex-direction: column;
    background: #fff;
    border: 1px solid #6e6e6e;
    border-width: 1px 2px 2px 2px;
    box-shadow: 1px 2px 5px rgba(0, 0, 0, .25);
    margin-right: 2px;
  }
  .model-title {
    height: 27px;
    flex: none;
    display: flex;
    align-items: center;
    gap: 5px;
    padding-left: 5px;
    color: #9a9a9a;
  }
  .winbtns.grey {
    gap: 24px;
    padding-right: 11px;
  }
  .model-menu {
    background: #f5f5f5;
    height: 22px;
    padding-left: 2px;
  }
  .model-tools {
    height: 22px;
    background: #f5f5f5;
    padding-left: 1.5px;
    border-bottom: 2px solid #a8a8a8;
    flex: none;
  }
  .model-tools .btn { width: 19.3px; }
  .model-body {
    flex: 1;
    min-height: 0;
    display: flex;
    background: #fff;
  }
  .canvas {
    display: block;
    flex: none;
    font-family: "Liberation Sans", Arial, sans-serif;
    font-size: 10.5px;
    font-weight: 700;
  }
  .canvas text {
    text-anchor: middle;
    fill: #0c1a22;
  }
  .canvas text.param { font-size: 11px; }

  .vscroll {
    display: flex;
    flex-direction: column;
    align-items: center;
    background: #f0f0f0;
  }
  .vscroll .chev { margin: 3px 0; }
  .model-v { width: 13px; flex: none; }
  .model-v-gap { flex: none; height: 196px; }
  .model-v-thumb { width: 100%; flex: 1; }
  .model-h {
    height: 14px;
    flex: none;
    display: flex;
  }
  .model-h .hscroll { flex: 1; padding-left: 3px; }
  .model-h-gap { flex: none; width: 30px; }
  .model-h-thumb { width: 663px; }
  .model-h .corner {
    width: 13px;
    flex: none;
    background: #f5f5f5;
  }

  .app-v {
    width: 15px;
    height: 534px;
    flex: none;
    margin-right: 4px;
  }
  .app-v .chev { margin: 4px 0; }
  .app-v-a { flex: none; height: 226px; }
  .app-v-thumb { width: 100%; height: 15px; }

  .catalog {
    width: 259px;
    flex: none;
    height: 534px;
    display: flex;
    flex-direction: column;
  }
  .cat-tools { height: 20px; padding-left: 3.5px; }
  .cat-tools .btn { width: 20px; }
  .cat-tools .sep { margin: 0 4px; }
  .location {
    height: 24px;
    flex: none;
    box-sizing: border-box;
    padding: 3px 0 0 2px;
    display: flex;
    align-items: center;
  }
  .loc-label { width: 45px; flex: none; }
  .loc-box {
    flex: 1;
    height: 19px;
    box-sizing: border-box;
    margin-right: -5px;
    padding: 0 9px 0 2px;
    display: flex;
    align-items: center;
    gap: 3px;
    background: #fff;
    border: 1px solid #9a9a9a;
  }
  .loc-text { flex: 1; }
  .cat-tree {
    height: 452px;
    flex: none;
    margin-left: 1px;
    display: flex;
    flex-direction: column;
    background: #fff;
    border-left: 2px solid #8a8f96;
    border-top: 1px solid #8a8f96;
  }
  .cat-top {
    flex: 1;
    min-height: 0;
    display: flex;
  }
  .cat-rows {
    flex: 1;
    min-width: 0;
    padding-top: 2px;
  }
  .cat-v { width: 13px; flex: none; }
  .cat-v-thumb { width: 100%; height: 343px; }
  .cat-h { height: 15px; margin-bottom: 1px; padding-right: 18px; }
  .cat-h-thumb { width: 132px; margin-left: 1px; }
  .tabs {
    height: 18px;
    margin-top: 3px;
    flex: none;
    display: flex;
    align-items: flex-start;
    padding-left: 4px;
    gap: 1px;
  }
  .tab {
    display: flex;
    align-items: center;
    gap: 2px;
    height: 18px;
    box-sizing: border-box;
    padding: 0 2px;
    border: 1px solid #b0b0b0;
    border-radius: 3px;
    background: #f4f4f4;
  }
  .tab.active { background: #fff; }
  .focus { outline: 1px dotted #444; }
  .off { color: #9a9a9a; }

  .status {
    flex: 1;
    padding-left: 983px;
    white-space: pre;
    line-height: 13px;
  }
</style>
